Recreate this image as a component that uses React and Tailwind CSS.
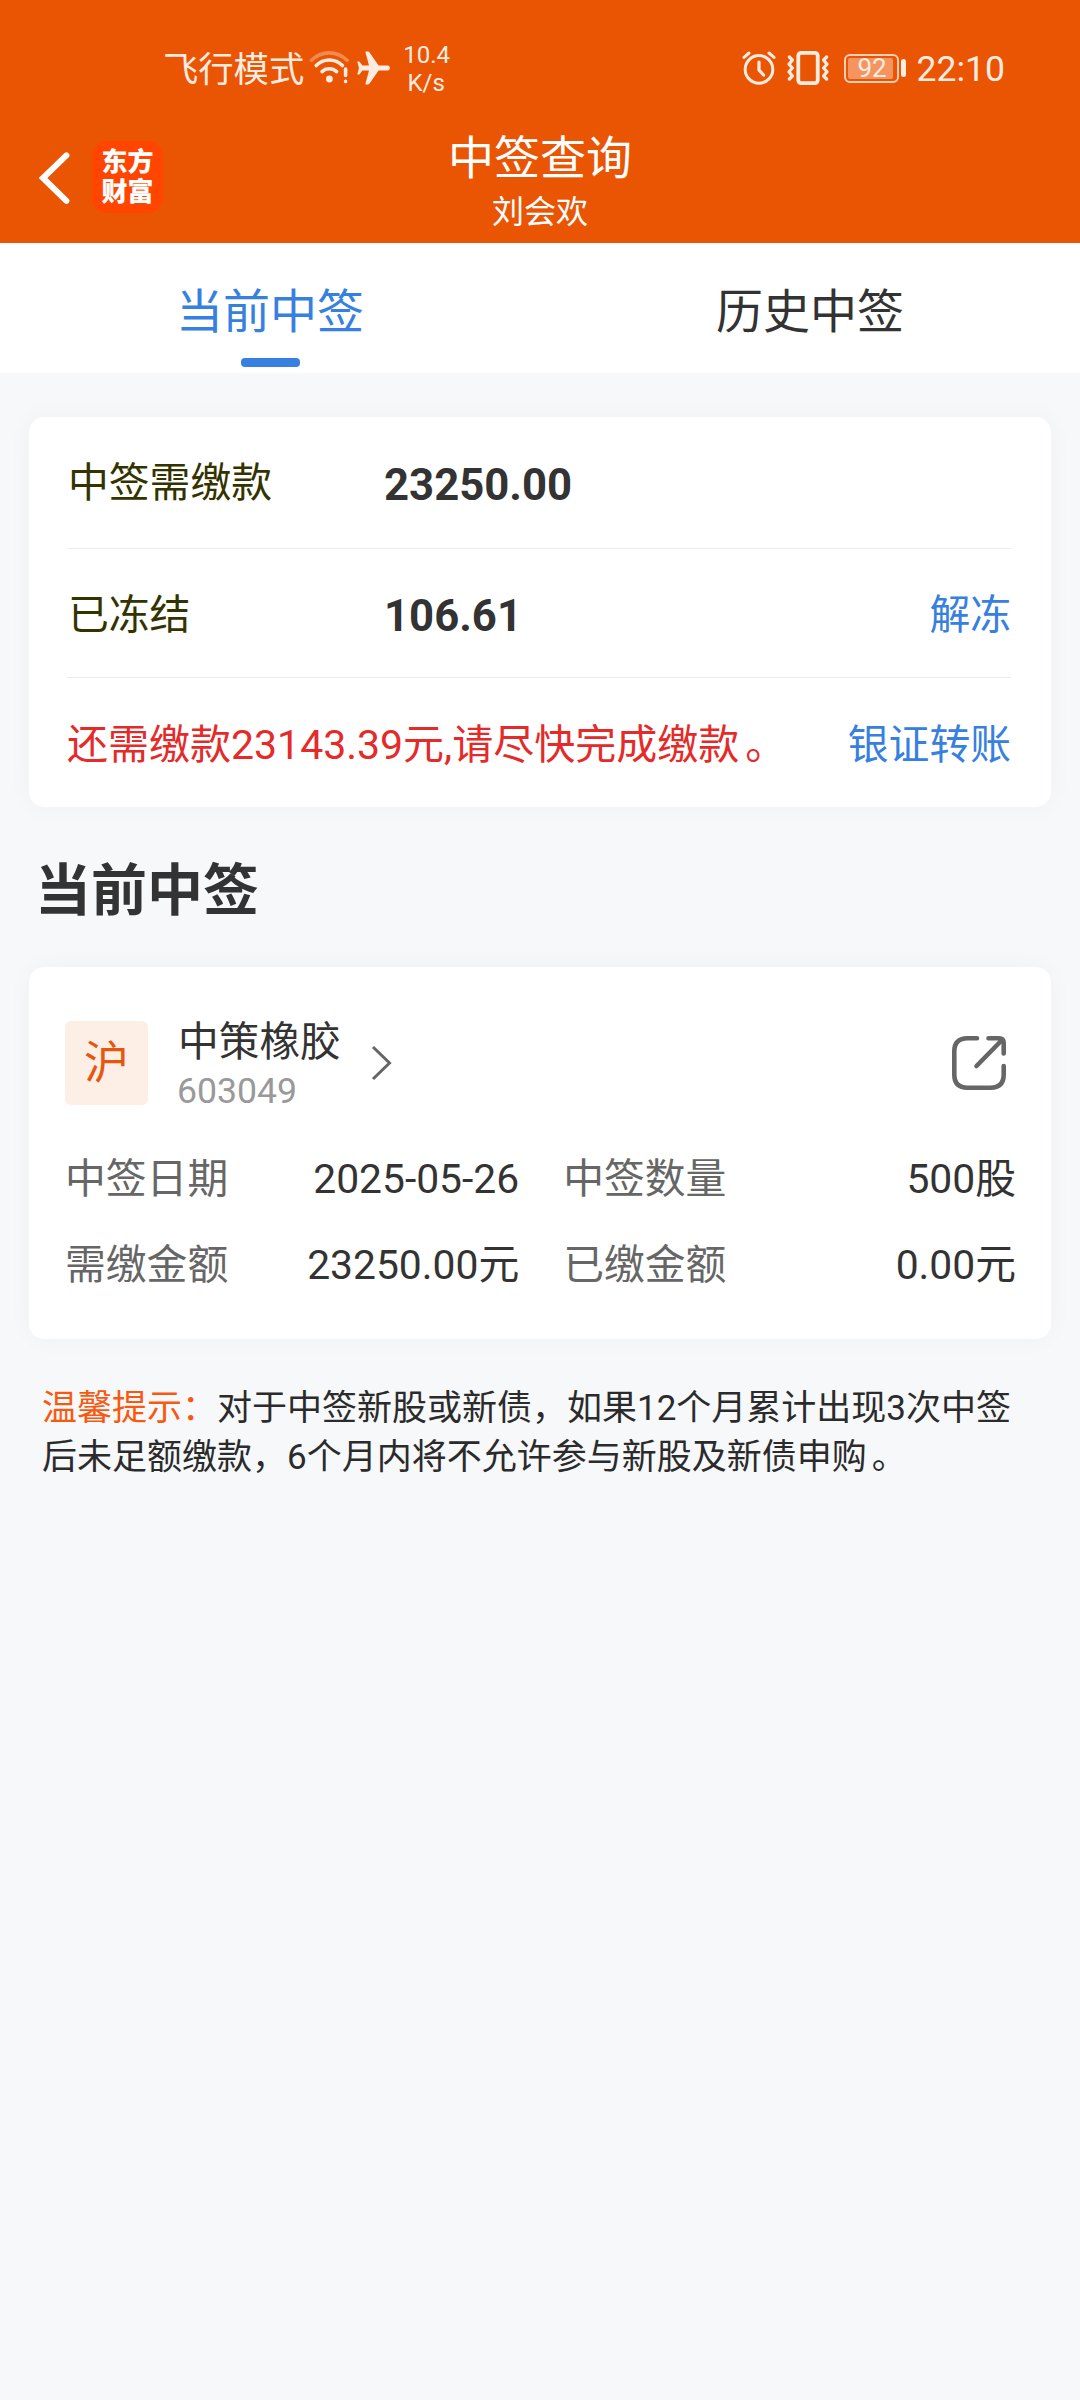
import React, { useState } from 'react';

const tabs = ['当前中签', '历史中签'];

const stock = {
  market: '沪',
  name: '中策橡胶',
  code: '603049',
  rows: [
    { label: '中签日期', value: '2025-05-26', label2: '中签数量', value2: '500股' },
    { label: '需缴金额', value: '23250.00元', label2: '已缴金额', value2: '0.00元' },
  ],
};

function WifiIcon() {
  return (
    <svg className="w-[40px] h-[34px]" viewBox="0 0 40 34" fill="none" stroke="#ffece0" strokeWidth="3.6" strokeLinecap="round">
      <path d="M2.5 9.2C12.5-0.6 28-0.6 38 9.2" opacity="0.35" />
      <path d="M7.2 14.6C14.6 7.2 26 7.2 33.4 14.6" />
      <path d="M13 20.6C17 16.8 23.6 16.8 27.6 20.6" />
      <circle cx="20.4" cy="28" r="3.4" fill="#ffece0" stroke="none" />
      <path d="M36.6 18v6.5M36.6 30.4v.2" />
    </svg>
  );
}

function PlaneIcon() {
  return (
    <svg className="w-[33px] h-[34px]" viewBox="0 0 33 34" fill="#ffece0">
      <path d="M31 14.6H21.6L12.6 1.4Q12 .6 11 .6H9.2Q8.2 .6 8.5 1.6L12 14.6H5.4L2.6 10.8Q2.3 10.4 1.8 10.4H.8Q.2 10.4 .4 11.1L2 17 .4 22.9Q.2 23.6 .8 23.6H1.8Q2.3 23.6 2.6 23.2L5.4 19.4H12L8.5 32.4Q8.2 33.4 9.2 33.4H11Q12 33.4 12.6 32.6L21.6 19.4H31Q33 18.8 33 17T31 14.6Z" />
    </svg>
  );
}

function AlarmIcon() {
  return (
    <svg className="w-[34px] h-[34px]" viewBox="0 0 34 34" fill="none" stroke="#ffece0" strokeWidth="3" strokeLinecap="round" strokeLinejoin="round">
      <circle cx="17" cy="18.4" r="13.8" />
      <path d="M17 11v8.2l4.6 4.8" strokeWidth="3.2" />
      <path d="M2 6.4L7 2M32 6.4L27 2" />
    </svg>
  );
}

function VibrateIcon() {
  return (
    <svg className="w-[42px] h-[34px]" viewBox="0 0 42 34" fill="none" stroke="#ffece0" strokeWidth="3.2" strokeLinecap="round" strokeLinejoin="round">
      <rect x="11.3" y="1.8" width="19.4" height="30.4" rx="3" strokeWidth="3.8" />
      <path d="M2.4 6L5.4 9 2 13.2 5.4 17 2 20.8 5.4 25 2.4 28" />
      <path d="M39.6 6L36.6 9 40 13.2 36.6 17 40 20.8 36.6 25 39.6 28" />
    </svg>
  );
}

function StatusBar() {
  return (
    <div className="flex h-[120px] items-start justify-between pl-[163px] pr-[75px] text-[#ffece0]">
      <div className="flex items-center h-[34px] mt-[51px]">
        <span className="pt-[3px] text-[35.3px] leading-[34px]">飞行模式</span>
        <span className="ml-[5px]"><WifiIcon /></span>
        <span className="ml-[8px]"><PlaneIcon /></span>
        <span className="ml-[13px] pt-[2px] w-[46px] text-center text-[24px] leading-[28px]">
          10.4<br />K/s
        </span>
      </div>
      <div className="flex items-center h-[34px] mt-[51px]">
        <AlarmIcon />
        <span className="ml-[11px]"><VibrateIcon /></span>
        <span className="ml-[15px] flex h-[29px] w-[55px] rounded-[6px] border-2 border-[#ffcfb5] p-[2px]">
          <span className="flex w-[45px] items-center justify-center rounded-[2px] bg-[#f4945f] pl-[4px] text-[26px] leading-none">92</span>
        </span>
        <span className="ml-[2px] h-[18px] w-[5px] rounded-full bg-[#ffece0]" />
        <span className="ml-[11px] pt-[2px] text-[35.5px] leading-[34px]">22:10</span>
      </div>
    </div>
  );
}

function Header() {
  return (
    <div className="grid grid-cols-[1fr_auto_1fr] h-[123px]">
      <div className="flex items-start pl-[38px]">
        <svg className="mt-[31px] w-[34px] h-[54px]" viewBox="0 0 34 54" fill="none" stroke="#fff" strokeWidth="6" strokeLinecap="round">
          <path d="M28.4 4.4L5 27l23.4 22.8" />
        </svg>
        <div className="ml-[20px] mt-[21px] h-[72px] w-[71px] rounded-[15px] bg-[#ff4500] pt-[6px] text-center text-[26px] font-black leading-[30px] text-white">
          东方<br />财富
        </div>
      </div>
      <div className="flex flex-col items-center text-white">
        <h1 className="mt-[10px] text-[46px] leading-[56px]">中签查询</h1>
        <span className="mt-[6px] text-[32px] leading-[40px]">刘会欢</span>
      </div>
      <div />
    </div>
  );
}

function Card({ children, className }) {
  return (
    <section className={`mx-[29px] rounded-[15px] bg-white shadow-[0_0_26px_rgba(0,0,0,0.035)] ${className}`}>
      {children}
    </section>
  );
}

export default function App() {
  const [active, setActive] = useState(0);

  return (
    <div lang="zh-CN" className="min-h-[2400px] w-[1080px] overflow-hidden bg-[#f7f8fa] font-[Roboto,'Noto_Sans_CJK_SC',sans-serif] text-[#333333]">
      <header className="bg-[#ea5504]">
        <StatusBar />
        <Header />
      </header>

      {/* Tabs */}
      <nav className="flex h-[130px] bg-white">
        {tabs.map((t, i) => (
          <button key={t} onClick={() => setActive(i)} className="flex w-1/2 flex-col items-center">
            <span className={`mt-[39px] text-[47px] leading-[60px] ${i === active ? 'text-[#3780df]' : ''}`}>{t}</span>
            {i === active && <span className="mt-[16px] h-[9px] w-[59px] rounded-[4px] bg-[#3780df]" />}
          </button>
        ))}
      </nav>

      {/* Payment summary */}
      <Card className="mt-[44px] h-[390px] pl-[38px] pr-[40px] text-[40.8px]">
        <div className="flex h-[132px] items-center border-b border-[#ebebeb] pt-[3px]">
          <span className="w-[317px] pl-px text-[#333300]">中签需缴款</span>
          <span className="pt-[3px] text-[43.7px] font-bold">23250.00</span>
        </div>
        <div className="flex h-[129px] items-center border-b border-[#ebebeb] pt-[5px]">
          <span className="w-[317px] pl-px text-[#333300]">已冻结</span>
          <span className="pt-[3px] text-[43.7px] font-bold">106.61</span>
          <span className="ml-auto text-[#3780df]">解冻</span>
        </div>
        <div className="flex h-[129px] items-center justify-between pt-[6px]">
          <span className="text-[41px] text-[#e52a2a]">还需缴款23143.39元,请尽快完成缴款<span className="pl-[6px]">。</span></span>
          <span className="text-[#3780df]">银证转账</span>
        </div>
      </Card>

      <h2 className="mt-[51px] ml-[35px] text-[56px] font-bold leading-[66px]">当前中签</h2>

      {/* Stock card */}
      <Card className="mt-[43px] h-[372px] pt-[54px] pl-[36px] pr-[35px]">
        <div className="flex h-[84px] items-center">
          <div className="flex h-[84px] w-[83px] items-center justify-center rounded-[6px] bg-[#fdeee6] pt-[2px] text-[45px] text-[#e5570c]">{stock.market}</div>
          <div className="ml-[29px] flex flex-col pt-[4px]">
            <span className="pl-px text-[40.7px] leading-[52px]">{stock.name}</span>
            <span className="text-[35.6px] leading-[46px] text-[#999999]">{stock.code}</span>
          </div>
          <svg className="ml-[30px] w-[22px] h-[36px]" viewBox="0 0 22 36" fill="none" stroke="#666" strokeWidth="3">
            <path d="M2 2l16.5 16L2 34" />
          </svg>
          <svg className="ml-auto mr-[9px] w-[56px] h-[56px]" viewBox="0 0 56 56" fill="none" stroke="#666" strokeWidth="4.6" strokeLinecap="round">
            <path d="M26 3.3H16.5Q3.3 3.3 3.3 16.5V39.5Q3.3 52.7 16.5 52.7H39.5Q52.7 52.7 52.7 39.5V31" />
            <path d="M37.5 3.3H48Q52.7 3.3 52.7 8V18.5M50.5 5.5L25.5 31" />
          </svg>
        </div>
        <div className="mt-[32px] flex flex-col text-[40.8px]">
          {stock.rows.map(r => (
            <div key={r.label} className="flex h-[86px] items-center">
              <span className="text-[#666666]">{r.label}</span>
              <span className="w-[291px] text-right">{r.value}</span>
              <span className="ml-[44px] text-[#666666]">{r.label2}</span>
              <span className="ml-auto">{r.value2}</span>
            </div>
          ))}
        </div>
      </Card>

      <p className="mt-[46px] ml-[42px] w-[990px] text-[35px] leading-[48.5px] text-[#2b2b2b]">
        <span className="text-[#f9590f]">温馨提示：</span>
        对于中签新股或新债，如果12个月累计出现3次中签<br />
        后未足额缴款，6个月内将不允许参与新股及新债申购<span className="pl-[5px]">。</span>
      </p>
    </div>
  );
}
